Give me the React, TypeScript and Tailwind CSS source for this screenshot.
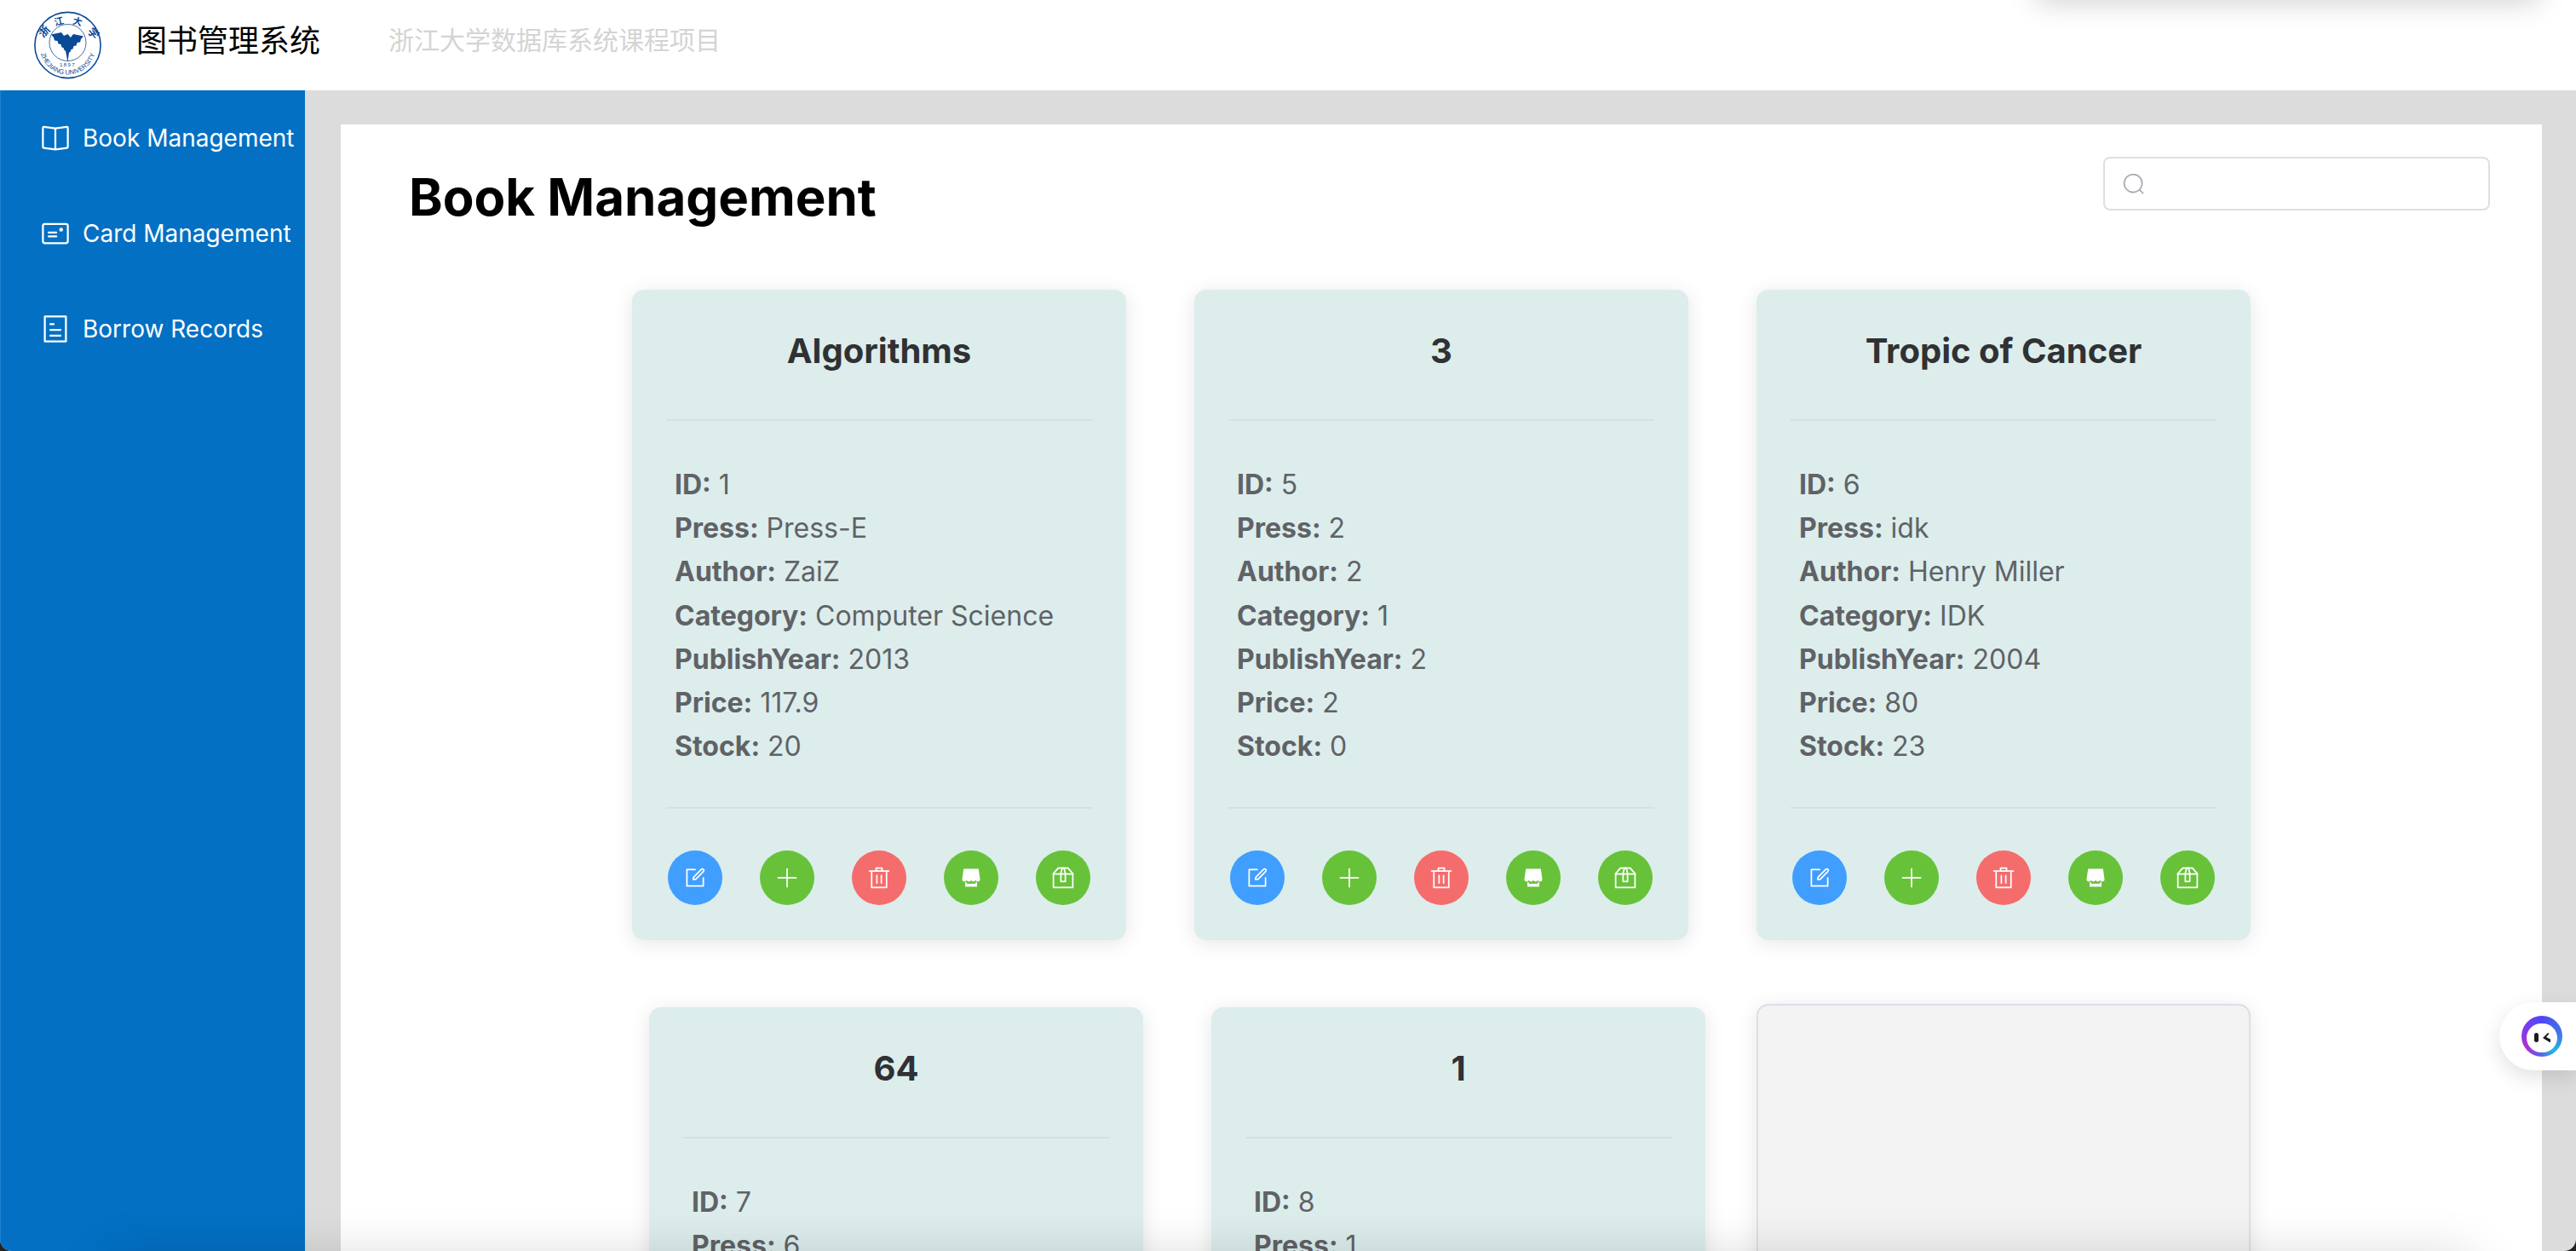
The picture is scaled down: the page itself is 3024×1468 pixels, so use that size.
import React from 'react';

type Book = {
  title: string;
  id: number;
  press: string;
  author: string;
  category: string;
  year: number;
  price: number;
  stock: number;
  shifted?: boolean;
};

const books: Book[] = [
  { title: 'Algorithms', id: 1, press: 'Press-E', author: 'ZaiZ', category: 'Computer Science', year: 2013, price: 117.9, stock: 20 },
  { title: '3', id: 5, press: '2', author: '2', category: '1', year: 2, price: 2, stock: 0 },
  { title: 'Tropic of Cancer', id: 6, press: 'idk', author: 'Henry Miller', category: 'IDK', year: 2004, price: 80, stock: 23 },
  { title: '64', id: 7, press: '6', author: '4', category: '4', year: 6, price: 4, stock: 6, shifted: true },
  { title: '1', id: 8, press: '1', author: '1', category: '1', year: 1, price: 1, stock: 1, shifted: true },
];

const Icon = ({ children, className }: { children: React.ReactNode; className: string }) => (
  <svg viewBox="0 0 1024 1024" fill="currentColor" className={className}>
    {children}
  </svg>
);

const EditIcon = () => (
  <Icon className="w-7 h-7">
    <path d="M832 512a32 32 0 1 1 64 0v352a32 32 0 0 1-32 32H160a32 32 0 0 1-32-32V160a32 32 0 0 1 32-32h352a32 32 0 0 1 0 64H192v640h640z" />
    <path d="m469.952 554.24 52.8-7.552L847.104 222.4a32 32 0 1 0-45.248-45.248L477.44 501.44l-7.552 52.8zm422.4-422.4a96 96 0 0 1 0 135.808l-331.84 331.84a32 32 0 0 1-18.112 9.088L436.8 623.68a32 32 0 0 1-36.224-36.224l15.104-105.6a32 32 0 0 1 9.024-18.112l331.904-331.84a96 96 0 0 1 135.744 0z" />
  </Icon>
);

const PlusIcon = () => (
  <Icon className="w-7 h-7">
    <path d="M480 480V128a32 32 0 0 1 64 0v352h352a32 32 0 0 1 0 64H544v352a32 32 0 1 1-64 0V544H128a32 32 0 0 1 0-64z" />
  </Icon>
);

const DeleteIcon = () => (
  <Icon className="w-7 h-7">
    <path d="M160 256H96a32 32 0 0 1 0-64h256V95.936a32 32 0 0 1 32-32h256a32 32 0 0 1 32 32V192h256a32 32 0 1 1 0 64h-64v672a32 32 0 0 1-32 32H192a32 32 0 0 1-32-32zm448-64v-64H416v64zM224 896h576V256H224zm192-128a32 32 0 0 1-32-32V416a32 32 0 0 1 64 0v320a32 32 0 0 1-32 32m192 0a32 32 0 0 1-32-32V416a32 32 0 0 1 64 0v320a32 32 0 0 1-32 32" />
  </Icon>
);

const ShopIcon = () => (
  <Icon className="w-7 h-7">
    <path d="M704 704h64v192H256V704h64v64h384zm188.544-152.192C894.528 559.616 896 567.616 896 576a96 96 0 1 1-192 0 96 96 0 1 1-192 0 96 96 0 1 1-192 0 96 96 0 1 1-192 0c0-8.384 1.408-16.384 3.392-24.192L192 128h640z" />
  </Icon>
);

const BoxIcon = () => (
  <Icon className="w-7 h-7">
    <path d="M317.056 128 128 344.064V896h768V344.064L706.944 128zm-14.528-64h418.944a32 32 0 0 1 24.064 10.88l206.528 236.096A32 32 0 0 1 960 332.032V928a32 32 0 0 1-32 32H96a32 32 0 0 1-32-32V332.032a32 32 0 0 1 7.936-21.12L278.4 75.008A32 32 0 0 1 302.528 64z" />
    <path d="M64 320h896v64H64z" />
    <path d="M448 327.872V640h128V327.872L526.08 128h-28.16zM448 64h128l64 256v352a32 32 0 0 1-32 32H416a32 32 0 0 1-32-32V320z" />
  </Icon>
);

const Logo = () => (
  <svg viewBox="0 0 80 80" className="w-20 h-20 shrink-0 text-[#0b4a97]" fill="currentColor">
    <defs>
      <path id="arcLow" d="M7 42a32.5 32.5 0 0 0 65 0" fill="none" />
    </defs>
    <circle cx="39.5" cy="40" r="38.6" fill="none" stroke="currentColor" strokeWidth="1.6" />
    <circle cx="39.5" cy="37" r="21.5" fill="none" stroke="currentColor" strokeWidth="0.8" />
    <path d="M39.5 27l3.5 4 3-4 12 2.5-3 3.5-1 3.5-3.5.5-1 3.5-3 .5-1 3.5-2 .5-1 3-1.500.5L39.5 60l-2.500-13.500-1.500-.5-1-3-2-.5-1-3.500-3-.5-1-3.500-3.500-.5-1-3.500-3-3.500 12-2.500 3 4z" />
    <text x="15" y="27" fontSize="13" fontWeight="700" textAnchor="middle" transform="rotate(-48 15 27)" fontFamily="'Noto Sans CJK SC', sans-serif">浙</text>
    <text x="30" y="16" fontSize="11" fontWeight="700" textAnchor="middle" transform="rotate(-14 30 16)" fontFamily="'Noto Sans CJK SC', sans-serif">江</text>
    <text x="50" y="16" fontSize="11" fontWeight="700" textAnchor="middle" transform="rotate(14 50 16)" fontFamily="'Noto Sans CJK SC', sans-serif">大</text>
    <text x="66" y="29" fontSize="13" fontWeight="700" textAnchor="middle" transform="rotate(52 66 29)" fontFamily="'Noto Sans CJK SC', sans-serif">学</text>
    <text x="39.5" y="65" fontSize="6" textAnchor="middle" letterSpacing="1.4" fontFamily="'Liberation Sans', sans-serif">1897</text>
    <text fontSize="7.6" fontFamily="'Liberation Sans', sans-serif" textAnchor="middle">
      <textPath href="#arcLow" startOffset="50%">ZHEJIANG UNIVERSITY</textPath>
    </text>
  </svg>
);

const Line = ({ label, value }: { label: string; value: string | number }) => (
  <p>
    <b className="font-bold">{label}:</b> {value}
  </p>
);

const RoundBtn = ({ color, children }: { color: string; children: React.ReactNode }) => (
  <button className={`w-16 h-16 rounded-full flex items-center justify-center text-white ${color}`}>{children}</button>
);

const BookCard = ({ book }: { book: Book }) => (
  <div
    className={`w-[580px] h-[763px] rounded-[14px] bg-[#dcedec] px-10 shadow-[0_4px_24px_rgba(0,0,0,0.1)] ${
      book.shifted ? 'translate-x-[20px] translate-y-[4px]' : ''
    }`}
  >
    <div className="h-[154px] pb-[8px] border-b-2 border-[#dcdde1] flex items-center justify-center text-[40px] font-bold text-[#303133]">
      {book.title}
    </div>
    <div className="pl-[10px] pt-[49px] pb-[46px] text-[32px] leading-[51.2px] text-[#606266] border-b-2 border-[#dcdde1]">
      <Line label="ID" value={book.id} />
      <Line label="Press" value={book.press} />
      <Line label="Author" value={book.author} />
      <Line label="Category" value={book.category} />
      <Line label="PublishYear" value={book.year} />
      <Line label="Price" value={book.price} />
      <Line label="Stock" value={book.stock} />
    </div>
    <div className="pt-[49px] px-[2px] flex justify-between">
      <RoundBtn color="bg-[#409eff]"><EditIcon /></RoundBtn>
      <RoundBtn color="bg-[#67c23a]"><PlusIcon /></RoundBtn>
      <RoundBtn color="bg-[#f56c6c]"><DeleteIcon /></RoundBtn>
      <RoundBtn color="bg-[#67c23a]"><ShopIcon /></RoundBtn>
      <RoundBtn color="bg-[#67c23a]"><BoxIcon /></RoundBtn>
    </div>
  </div>
);

const MenuItem = ({ icon, label }: { icon: React.ReactNode; label: string }) => (
  <div className="h-[112px] pl-[46px] flex items-center gap-[14px] text-[28px] text-white">
    {icon}
    <span>{label}</span>
  </div>
);

export default function App() {
  return (
    <div className="w-[3024px] h-[1468px] bg-[#222222]">
      <div className="relative w-full h-full overflow-hidden rounded-b-[14px] flex flex-col bg-[#dcdcdc] font-['Inter',sans-serif]">
        <header className="h-[106px] shrink-0 bg-white flex items-center pl-10">
          <Logo />
          <h1 className="ml-[40px] pb-[16px] text-[36px] text-black font-['Noto_Sans_CJK_SC',sans-serif]">图书管理系统</h1>
          <span className="ml-[80px] pb-[16px] text-[30px] text-[#d4d4d4] font-['Noto_Sans_CJK_SC',sans-serif]">浙江大学数据库系统课程项目</span>
        </header>

        <div className="flex flex-1 min-h-0">
          <aside className="w-[358px] shrink-0 bg-[#0370c3] border-l border-[#1c80cd]">
            <MenuItem
              label="Book Management"
              icon={
                <Icon className="w-9 h-9">
                  <path d="m512 863.36 384-54.848v-638.72L525.568 222.72a96 96 0 0 1-27.136 0L128 169.792v638.72zM137.024 106.432l370.432 52.928a32 32 0 0 0 9.088 0l370.432-52.928A64 64 0 0 1 960 169.792v638.72a64 64 0 0 1-54.976 63.36l-388.48 55.488a32 32 0 0 1-9.088 0l-388.48-55.488A64 64 0 0 1 64 808.512v-638.72a64 64 0 0 1 73.024-63.36z" />
                  <path d="M480 192h64v704h-64z" />
                </Icon>
              }
            />
            <MenuItem
              label="Card Management"
              icon={
                <Icon className="w-9 h-9">
                  <path d="M160 224a32 32 0 0 0-32 32v512a32 32 0 0 0 32 32h704a32 32 0 0 0 32-32V256a32 32 0 0 0-32-32zm0-64h704a96 96 0 0 1 96 96v512a96 96 0 0 1-96 96H160a96 96 0 0 1-96-96V256a96 96 0 0 1 96-96" />
                  <path d="M704 320a64 64 0 1 1 0 128 64 64 0 0 1 0-128M288 448h256q32 0 32 32t-32 32H288q-32 0-32-32t32-32m0 128h256q32 0 32 32t-32 32H288q-32 0-32-32t32-32" />
                </Icon>
              }
            />
            <MenuItem
              label="Borrow Records"
              icon={
                <Icon className="w-9 h-9">
                  <path d="M192 128v768h640V128zm-32-64h704a32 32 0 0 1 32 32v832a32 32 0 0 1-32 32H160a32 32 0 0 1-32-32V96a32 32 0 0 1 32-32m160 448h384v64H320zm0-192h160v64H320zm0 384h384v64H320z" />
                </Icon>
              }
            />
          </aside>

          <main className="flex-1 min-w-0 pt-10 pl-[42px] pr-10">
            <div className="h-full bg-white pt-[38px] pl-20 pr-[61px]">
              <div className="flex justify-between items-start">
                <h2 className="pt-[5px] text-[60px] leading-[85px] font-bold text-black">Book Management</h2>
                <div className="w-[454px] h-[63px] rounded-lg border-2 border-[#dcdfe6] flex items-center pl-[20px] text-[#a8abb2]">
                  <Icon className="w-7 h-7">
                    <path d="m795.904 750.72 124.992 124.928a32 32 0 0 1-45.248 45.248L750.656 795.904a416 416 0 1 1 45.248-45.248zM480 832a352 352 0 1 0 0-704 352 352 0 0 0 0 704" />
                  </Icon>
                </div>
              </div>
              <div className="mt-[66px] ml-[262px] grid grid-cols-[580px_580px_580px] gap-x-20 gap-y-[75px]">
                {books.map((book) => (
                  <BookCard key={book.id} book={book} />
                ))}
                <div className="w-[580px] h-[763px] rounded-[14px] border-2 border-[#dcdfe6] bg-[#f3f3f3] shadow-[0_4px_24px_rgba(0,0,0,0.1)]" />
              </div>
            </div>
          </main>
        </div>

        {/* floating helper tab */}
        <div className="absolute left-[2934px] top-[1176px] w-[90px] h-20 rounded-l-[40px] bg-white shadow-[0_8px_24px_rgba(0,0,0,0.12)] flex items-center pl-[26px]">
          <div className="w-12 h-12 rounded-full bg-[conic-gradient(#4f46f5_0deg,#3f7ce8_90deg,#22b8e0_140deg,#5a60e8_185deg,#b030d0_235deg,#7a3cf0_300deg,#4f46f5_360deg)] flex items-center justify-center">
            <div className="mt-[3px] w-[36px] h-[34px] rounded-full bg-white flex items-center justify-center gap-[5px]">
              <span className="w-[5px] h-[11px] rounded-full bg-[#1c1c1c]" />
              <svg viewBox="0 0 9 11" className="w-[9px] h-[11px] text-[#1c1c1c]" fill="currentColor">
                <path d="M6 0l1.500 1L4 5l5 2.500V11L8 11 0 6z" />
              </svg>
            </div>
          </div>
        </div>

        {/* shadows of things sitting just outside the captured window */}
        <div className="absolute left-[2390px] top-[-30px] w-[590px] h-[30px] bg-white shadow-[0_0_34px_rgba(0,0,0,0.22)]" />
        <div className="absolute left-[130px] top-[1482px] w-[2770px] h-[30px] bg-white shadow-[0_0_60px_rgba(0,0,0,0.25)]" />
      </div>
    </div>
  );
}
